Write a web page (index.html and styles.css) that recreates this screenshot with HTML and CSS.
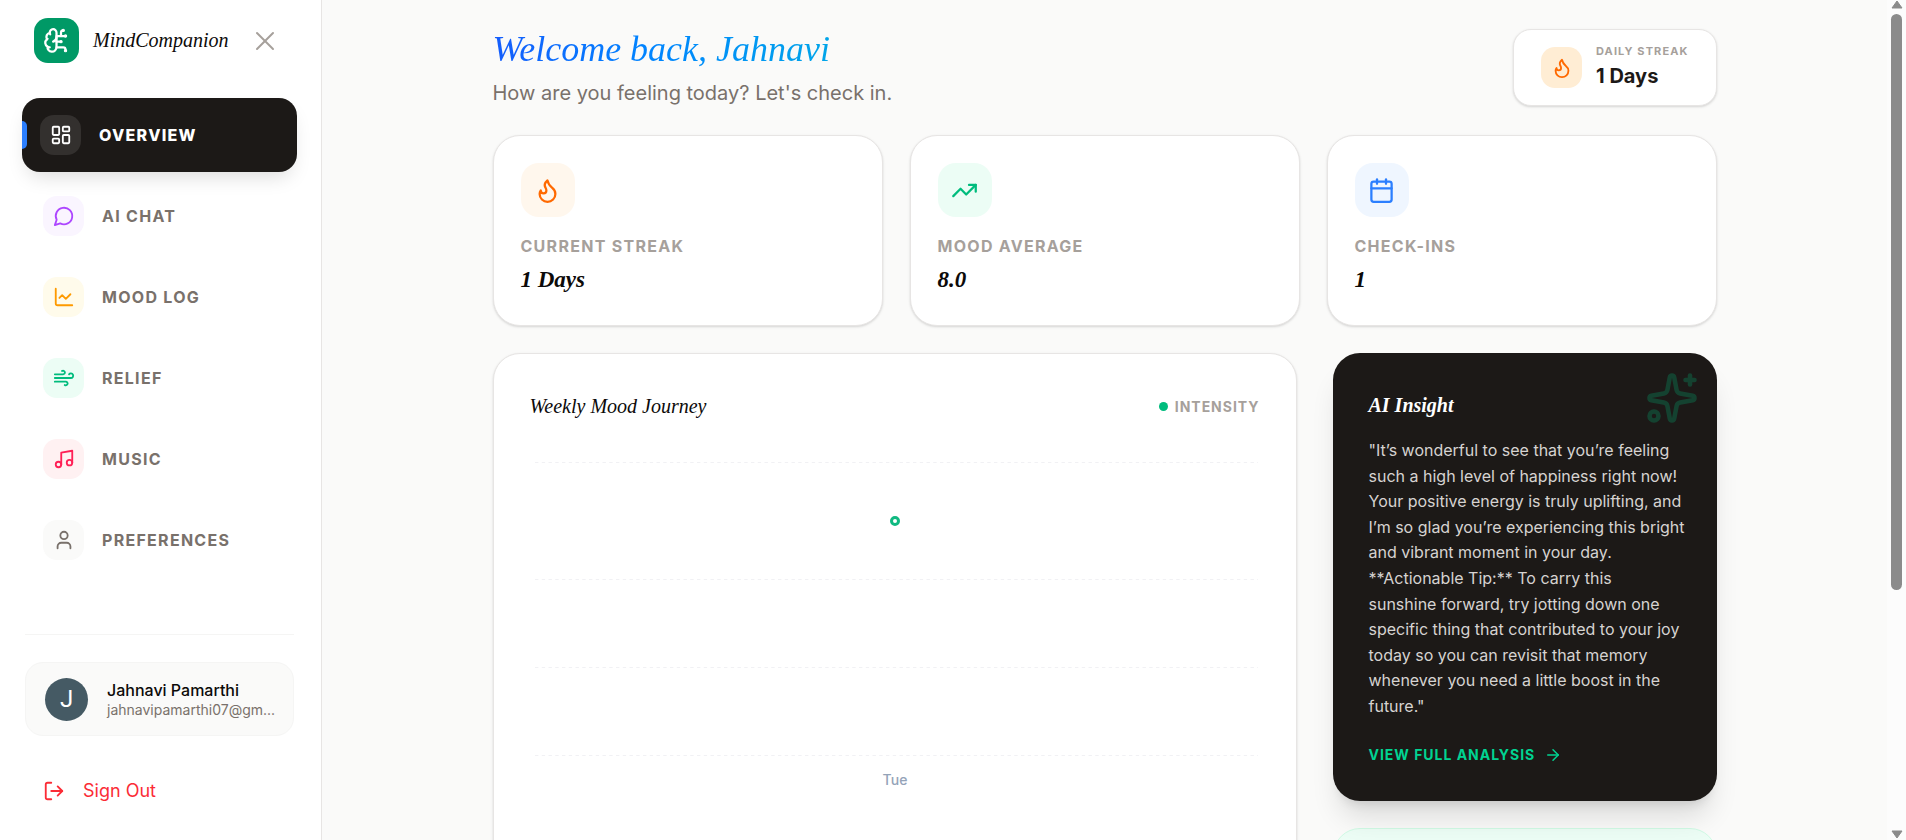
FILE: index.html
```html
<!DOCTYPE html>
<html lang="en">
<head>
<meta charset="utf-8">
<title>MindCompanion</title>
<meta name="viewport" content="width=device-width, initial-scale=1">
<link rel="stylesheet" href="styles.css">
</head>
<body>
<div class="shell">
  <aside class="sidebar">
    <div class="brand">
      <span class="brand-mark"><svg class="icon icon-27" viewBox="0 0 24 24" aria-hidden="true"><path d="M12 5a3 3 0 1 0-5.997.125 4 4 0 0 0-2.526 5.77 4 4 0 0 0 .556 6.588A4 4 0 1 0 12 18Z"/><path d="M9 13a4.5 4.5 0 0 0 3-4"/><path d="M6.003 5.125A3 3 0 0 0 6.401 6.5"/><path d="M3.477 10.896a4 4 0 0 1 .585-.396"/><path d="M6 18a4 4 0 0 1-1.967-.516"/><path d="M12 13h4"/><path d="M12 18h6a2 2 0 0 1 2 2v1"/><path d="M12 8h8"/><path d="M16 8V5a2 2 0 0 1 2-2"/><circle cx="16" cy="13" r=".5"/><circle cx="18" cy="3" r=".5"/><circle cx="20" cy="21" r=".5"/><circle cx="20" cy="8" r=".5"/></svg></span>
      <span class="brand-name">MindCompanion</span>
      <button class="close" type="button" aria-label="Close menu"><svg class="icon icon-32 thin" viewBox="0 0 24 24" aria-hidden="true"><path d="M18 6 6 18"/><path d="m6 6 12 12"/></svg></button>
    </div>

    <nav class="nav">
      <a class="nav-item active" href="#overview"><span class="nav-icon"><svg class="icon icon-22" viewBox="0 0 24 24" aria-hidden="true"><rect width="7" height="9" x="3" y="3" rx="1"/><rect width="7" height="5" x="14" y="3" rx="1"/><rect width="7" height="9" x="14" y="12" rx="1"/><rect width="7" height="5" x="3" y="16" rx="1"/></svg></span>Overview</a>
      <a class="nav-item" href="#chat"><span class="nav-icon purple"><svg class="icon icon-22" viewBox="0 0 24 24" aria-hidden="true"><path d="M7.9 20A9 9 0 1 0 4 16.1L2 22Z" /></svg></span>AI Chat</a>
      <a class="nav-item" href="#mood"><span class="nav-icon amber"><svg class="icon icon-22" viewBox="0 0 24 24" aria-hidden="true"><path d="M3 3v16a2 2 0 0 0 2 2h16"/><path d="m19 9-5 5-4-4-3 3"/></svg></span>Mood Log</a>
      <a class="nav-item" href="#relief"><span class="nav-icon green"><svg class="icon icon-22" viewBox="0 0 24 24" aria-hidden="true"><path d="M12.8 19.6A2 2 0 1 0 14 16H2"/><path d="M17.5 8a2.5 2.5 0 1 1 2 4H2"/><path d="M9.8 4.4A2 2 0 1 1 11 8H2"/></svg></span>Relief</a>
      <a class="nav-item" href="#music"><span class="nav-icon rose"><svg class="icon icon-22" viewBox="0 0 24 24" aria-hidden="true"><path d="M9 18V5l12-2v13"/><circle cx="6" cy="18" r="3"/><circle cx="18" cy="16" r="3"/></svg></span>Music</a>
      <a class="nav-item" href="#preferences"><span class="nav-icon stone"><svg class="icon icon-22" viewBox="0 0 24 24" aria-hidden="true"><path d="M19 21v-2a4 4 0 0 0-4-4H9a4 4 0 0 0-4 4v2"/><circle cx="12" cy="7" r="4"/></svg></span>Preferences</a>
    </nav>

    <div class="account">
      <div class="profile">
        <span class="avatar">J</span>
        <div class="profile-text">
          <div class="profile-name">Jahnavi Pamarthi</div>
          <div class="profile-mail">jahnavipamarthi07@gm...</div>
        </div>
      </div>
      <button class="sign-out" type="button"><svg class="icon icon-22" viewBox="0 0 24 24" aria-hidden="true"><path d="m16 17 5-5-5-5"/><path d="M21 12H9"/><path d="M9 21H5a2 2 0 0 1-2-2V5a2 2 0 0 1 2-2h4"/></svg>Sign Out</button>
    </div>
  </aside>

  <main class="main">
    <div class="content">
      <header class="page-head">
        <div>
          <h1 class="welcome">Welcome back, Jahnavi</h1>
          <p class="subtitle">How are you feeling today? Let's check in.</p>
        </div>
        <div class="streak card">
          <span class="streak-icon"><svg class="icon icon-22" viewBox="0 0 24 24" aria-hidden="true"><path d="M8.5 14.5A2.5 2.5 0 0 0 11 12c0-1.38-.5-2-1-3-1.072-2.143-.224-4.054 2-6 .5 2.5 2 4.9 4 6.5 2 1.6 3 3.5 3 5.5a7 7 0 1 1-14 0c0-1.153.433-2.294 1-3a2.5 2.5 0 0 0 2.5 2.5z"/></svg></span>
          <div>
            <div class="streak-label">Daily Streak</div>
            <div class="streak-value">1 Days</div>
          </div>
        </div>
      </header>

      <section class="stats">
        <div class="stat card">
          <span class="stat-icon orange"><svg class="icon icon-27" viewBox="0 0 24 24" aria-hidden="true"><path d="M8.5 14.5A2.5 2.5 0 0 0 11 12c0-1.38-.5-2-1-3-1.072-2.143-.224-4.054 2-6 .5 2.5 2 4.9 4 6.5 2 1.6 3 3.5 3 5.5a7 7 0 1 1-14 0c0-1.153.433-2.294 1-3a2.5 2.5 0 0 0 2.5 2.5z"/></svg></span>
          <div class="stat-label">Current Streak</div>
          <div class="stat-value">1 Days</div>
        </div>
        <div class="stat card">
          <span class="stat-icon green"><svg class="icon icon-27" viewBox="0 0 24 24" aria-hidden="true"><path d="M16 7h6v6"/><path d="m22 7-8.500 8.500-5-5L2 17"/></svg></span>
          <div class="stat-label">Mood Average</div>
          <div class="stat-value">8.0</div>
        </div>
        <div class="stat card">
          <span class="stat-icon blue"><svg class="icon icon-27" viewBox="0 0 24 24" aria-hidden="true"><path d="M8 2v4"/><path d="M16 2v4"/><rect width="18" height="18" x="3" y="4" rx="2"/><path d="M3 10h18"/></svg></span>
          <div class="stat-label">Check-ins</div>
          <div class="stat-value">1</div>
        </div>
      </section>

      <section class="panels">
        <div class="journey card">
          <div class="journey-head">
            <h2 class="panel-title">Weekly Mood Journey</h2>
            <span class="legend">Intensity</span>
          </div>
          <svg class="chart" viewBox="0 0 730 396" role="img" aria-label="Mood intensity on Tuesday: 8">
            <g class="grid-lines"><path d="M5 20.500H728"/><path d="M5 137.500H728"/><path d="M5 225.500H728"/><path d="M5 313.500H728"/></g>
            <circle class="point" cx="365" cy="79" r="3.500"/>
            <text class="tick" x="365" y="343">Tue</text>
          </svg>
        </div>
        <div class="side">
          <div class="insight">
            <svg class="icon sparkles" viewBox="0 0 24 24" aria-hidden="true"><path d="M11.017 2.814a1 1 0 0 1 1.966 0l1.051 5.558a2 2 0 0 0 1.594 1.594l5.558 1.051a1 1 0 0 1 0 1.966l-5.558 1.051a2 2 0 0 0-1.594 1.594l-1.051 5.558a1 1 0 0 1-1.966 0l-1.051-5.558a2 2 0 0 0-1.594-1.594l-5.558-1.051a1 1 0 0 1 0-1.966l5.558-1.051a2 2 0 0 0 1.594-1.594z"/><path d="M20 2v4"/><path d="M22 4h-4"/><circle cx="4" cy="20" r="2"/></svg>
            <h2 class="panel-title">AI Insight</h2>
            <p class="insight-text">"It’s wonderful to see that you’re feeling such a high level of happiness right now! Your positive energy is truly uplifting, and I’m so glad you’re experiencing this bright and vibrant moment in your day. **Actionable Tip:** To carry this<br>sunshine forward, try jotting down one specific thing that contributed to your joy<br>today so you can revisit that memory whenever you need a little boost in the future."</p>
            <a class="insight-link" href="#analysis">View Full Analysis<svg class="icon icon-18" viewBox="0 0 24 24" aria-hidden="true"><path d="M5 12h14"/><path d="m12 5 7 7-7 7"/></svg></a>
          </div>
          <div class="mint-card"></div>
        </div>
      </section>
    </div>
  </main>

  <div class="scrollbar" aria-hidden="true">
    <svg class="scroll-arrow" viewBox="0 0 12 9"><path d="M6 1 11 8H1Z"/></svg>
    <div class="scroll-track"><div class="scroll-thumb"></div></div>
    <svg class="scroll-arrow" viewBox="0 0 12 9"><path d="M6 8 1 1H11Z"/></svg>
  </div>
</div>
</body>
</html>
```
FILE: styles.css
```css
* { box-sizing: border-box; }

body {
  margin: 0;
  font-family: Inter, "Liberation Sans", sans-serif;
  background: #fafaf9;
  color: #0c0a09;
}

h1, h2, p { margin: 0; }
a { text-decoration: none; }
button { font: inherit; border: 0; background: none; padding: 0; cursor: pointer; }

.shell { display: flex; height: 100vh; overflow: hidden; }

.icon {
  flex: none;
  display: block;
  fill: none;
  stroke: currentColor;
  stroke-width: 2;
  stroke-linecap: round;
  stroke-linejoin: round;
}
.icon.thin { stroke-width: 1.5; }
.icon-18 { width: 18px; height: 18px; }
.icon-22 { width: 22px; height: 22px; }
.icon-27 { width: 27px; height: 27px; }
.icon-32 { width: 32px; height: 32px; }

.card {
  background: #fff;
  border: 1px solid #e7e5e4;
  border-radius: 27px;
  box-shadow: 0 1px 3px rgba(0, 0, 0, .1), 0 1px 2px rgba(0, 0, 0, .06);
}

/* Sidebar */
.sidebar {
  flex: none;
  width: 322px;
  display: flex;
  flex-direction: column;
  background: #fff;
  border-right: 1px solid #e7e5e4;
  padding: 18px 27px 22px 25px;
}
.brand { display: flex; align-items: center; padding: 0 13px 0 9px; }
.brand-mark {
  display: grid;
  place-items: center;
  width: 45px;
  height: 45px;
  border-radius: 14px;
  background: #096;
  color: #fff;
}
.brand-name {
  margin-left: 14px;
  font-family: "Liberation Serif", serif;
  font-style: italic;
  font-size: 20px;
}
.close { margin-left: auto; color: #a6a09b; }

.nav { display: flex; flex-direction: column; gap: 9px; margin-top: 36px; }
.nav-item {
  position: relative;
  display: flex;
  align-items: center;
  gap: 18px;
  height: 72px;
  padding: 0 18px;
  border-radius: 18px;
  color: #79716b;
  font-size: 16px;
  font-weight: 700;
  letter-spacing: .08em;
  text-transform: uppercase;
}
.nav-item.active {
  height: 74px;
  margin: -1px -3px;
  background: #1c1917;
  color: #fff;
  font-weight: 800;
  box-shadow: 0 10px 20px -6px rgba(0, 0, 0, .15);
}
.nav-item.active::before {
  content: "";
  position: absolute;
  left: 0;
  top: 23px;
  width: 5px;
  height: 28px;
  border-radius: 0 5px 5px 0;
  background: #2b7fff;
}
.nav-icon {
  display: grid;
  place-items: center;
  width: 41px;
  height: 40px;
  border-radius: 14px;
}
.active .nav-icon { background: #33302e; }
.purple { background: #faf5ff; color: #ad46ff; }
.amber { background: #fffbeb; color: #fe9a00; }
.green { background: #ecfdf5; color: #00bc7d; }
.rose { background: #fff1f2; color: #ff2056; }
.stone { background: #fafaf9; color: #79716b; }
.orange { background: #fff7ed; color: #ff6900; }
.blue { background: #eff6ff; color: #2b7fff; }

.account { margin-top: auto; border-top: 1px solid #f5f5f4; padding-top: 27px; }
.profile {
  display: flex;
  align-items: center;
  gap: 19px;
  height: 74px;
  padding: 0 19px;
  border: 1px solid #f5f5f4;
  border-radius: 18px;
  background: #fafaf9;
}
.avatar {
  flex: none;
  display: grid;
  place-items: center;
  width: 43px;
  height: 43px;
  border-radius: 50%;
  background: #455a64;
  color: #fff;
  font-family: Roboto, sans-serif;
  font-size: 24px;
}
.profile-text { min-width: 0; }
.profile-name { font-size: 16px; line-height: 20px; font-weight: 500; }
.profile-mail { font-size: 14px; line-height: 19px; color: #79716b; white-space: nowrap; }
.sign-out {
  display: flex;
  align-items: center;
  gap: 18px;
  margin-top: 27px;
  padding: 14px 18px;
  font-size: 18px;
  line-height: 27px;
  color: #fb2c36;
}

/* Main column */
.main { flex: 1; min-width: 0; overflow: hidden; padding: 27px 36px 0; }
.content { max-width: 1224px; margin: 0 auto; }
.page-head { display: flex; justify-content: space-between; align-items: center; }
.welcome {
  width: fit-content;
  padding-right: 6px;
  font-family: "Liberation Serif", serif;
  font-style: italic;
  font-weight: 400;
  font-size: 36px;
  line-height: 45px;
  background: linear-gradient(90deg, #155dfc, #0084ff 45%, #00a6e8);
  -webkit-background-clip: text;
  background-clip: text;
  color: transparent;
}
.subtitle { margin-top: 6px; font-size: 20px; line-height: 30px; color: #79716b; }

.streak {
  display: flex;
  align-items: center;
  gap: 14px;
  height: 77px;
  padding: 0 27px;
  border-radius: 18px;
}
.streak-icon {
  display: grid;
  place-items: center;
  width: 41px;
  height: 41px;
  border-radius: 14px;
  background: #ffedd4;
  color: #ff6900;
}
.streak-label {
  font-size: 11px;
  line-height: 16px;
  font-weight: 700;
  letter-spacing: .1em;
  text-transform: uppercase;
  color: #a6a09b;
}
.streak-value { margin-top: 2px; font-size: 20px; line-height: 31px; font-weight: 700; color: #1c1917; }

.stats { display: grid; grid-template-columns: repeat(3, 1fr); gap: 27px; margin-top: 27px; }
.stat { padding: 27px; }
.stat-icon { display: grid; place-items: center; width: 54px; height: 54px; border-radius: 18px; }
.stat-label {
  margin-top: 18px;
  font-size: 16px;
  line-height: 22px;
  font-weight: 700;
  letter-spacing: .08em;
  text-transform: uppercase;
  color: #a6a09b;
}
.stat-value {
  margin-top: 5px;
  font-family: "Liberation Serif", serif;
  font-style: italic;
  font-weight: 600;
  font-size: 23px;
  line-height: 36px;
}

.panels { display: grid; grid-template-columns: 67fr 32fr; gap: 36px; margin-top: 27px; }
.panel-title {
  font-family: "Liberation Serif", serif;
  font-style: italic;
  font-weight: 600;
  font-size: 20px;
  line-height: 32px;
}
.journey { padding: 36px; }
.journey .panel-title { font-weight: 400; }
.journey-head { display: flex; justify-content: space-between; align-items: center; }
.legend {
  display: flex;
  align-items: center;
  gap: 7px;
  font-size: 14px;
  font-weight: 700;
  letter-spacing: .07em;
  text-transform: uppercase;
  color: #a6a09b;
}
.legend::before { content: ""; width: 9px; height: 9px; border-radius: 50%; background: #00bc7d; }
.chart { display: block; width: 100%; margin-top: 20px; }
.grid-lines { stroke: #f1f1f4; stroke-width: 1; stroke-dasharray: 3.375 3.375; }
.point { fill: #fff; stroke: #10b981; stroke-width: 3; }
.tick { font-size: 14px; font-weight: 500; fill: #94a3b8; text-anchor: middle; }

.side { display: flex; flex-direction: column; gap: 27px; }
.insight {
  position: relative;
  padding: 36px;
  border-radius: 27px;
  background: #1c1917;
  color: #fff;
  box-shadow: 0 22px 28px -6px rgba(0, 0, 0, .12), 0 9px 11px -7px rgba(0, 0, 0, .12);
}
.sparkles {
  position: absolute;
  top: 18px;
  right: 18px;
  width: 54px;
  height: 54px;
  color: #00bc7d;
  opacity: .25;
}
.insight-text { margin-top: 17px; margin-right: -8px; font-size: 16px; line-height: 1.6; color: #d6d3d1; }
.insight-link {
  display: flex;
  align-items: center;
  gap: 9px;
  margin-top: 25px;
  font-size: 14px;
  line-height: 20px;
  font-weight: 700;
  letter-spacing: .07em;
  text-transform: uppercase;
  color: #00d492;
}
.mint-card { height: 200px; border: 1px solid #d0fae5; border-radius: 27px; background: #ecfdf5; }

/* Scroll rail */
.scrollbar {
  flex: none;
  width: 19px;
  display: flex;
  flex-direction: column;
  align-items: center;
  padding-bottom: 1px;
  background: #fcfcfc;
}
.scroll-arrow { width: 12px; height: 9px; fill: #8b8b8b; stroke: #8b8b8b; stroke-linejoin: round; }
.scroll-track { flex: 1; padding: 5px 0; }
.scroll-thumb { width: 11px; height: 71%; border-radius: 6px; background: #8b8b8b; }
```
